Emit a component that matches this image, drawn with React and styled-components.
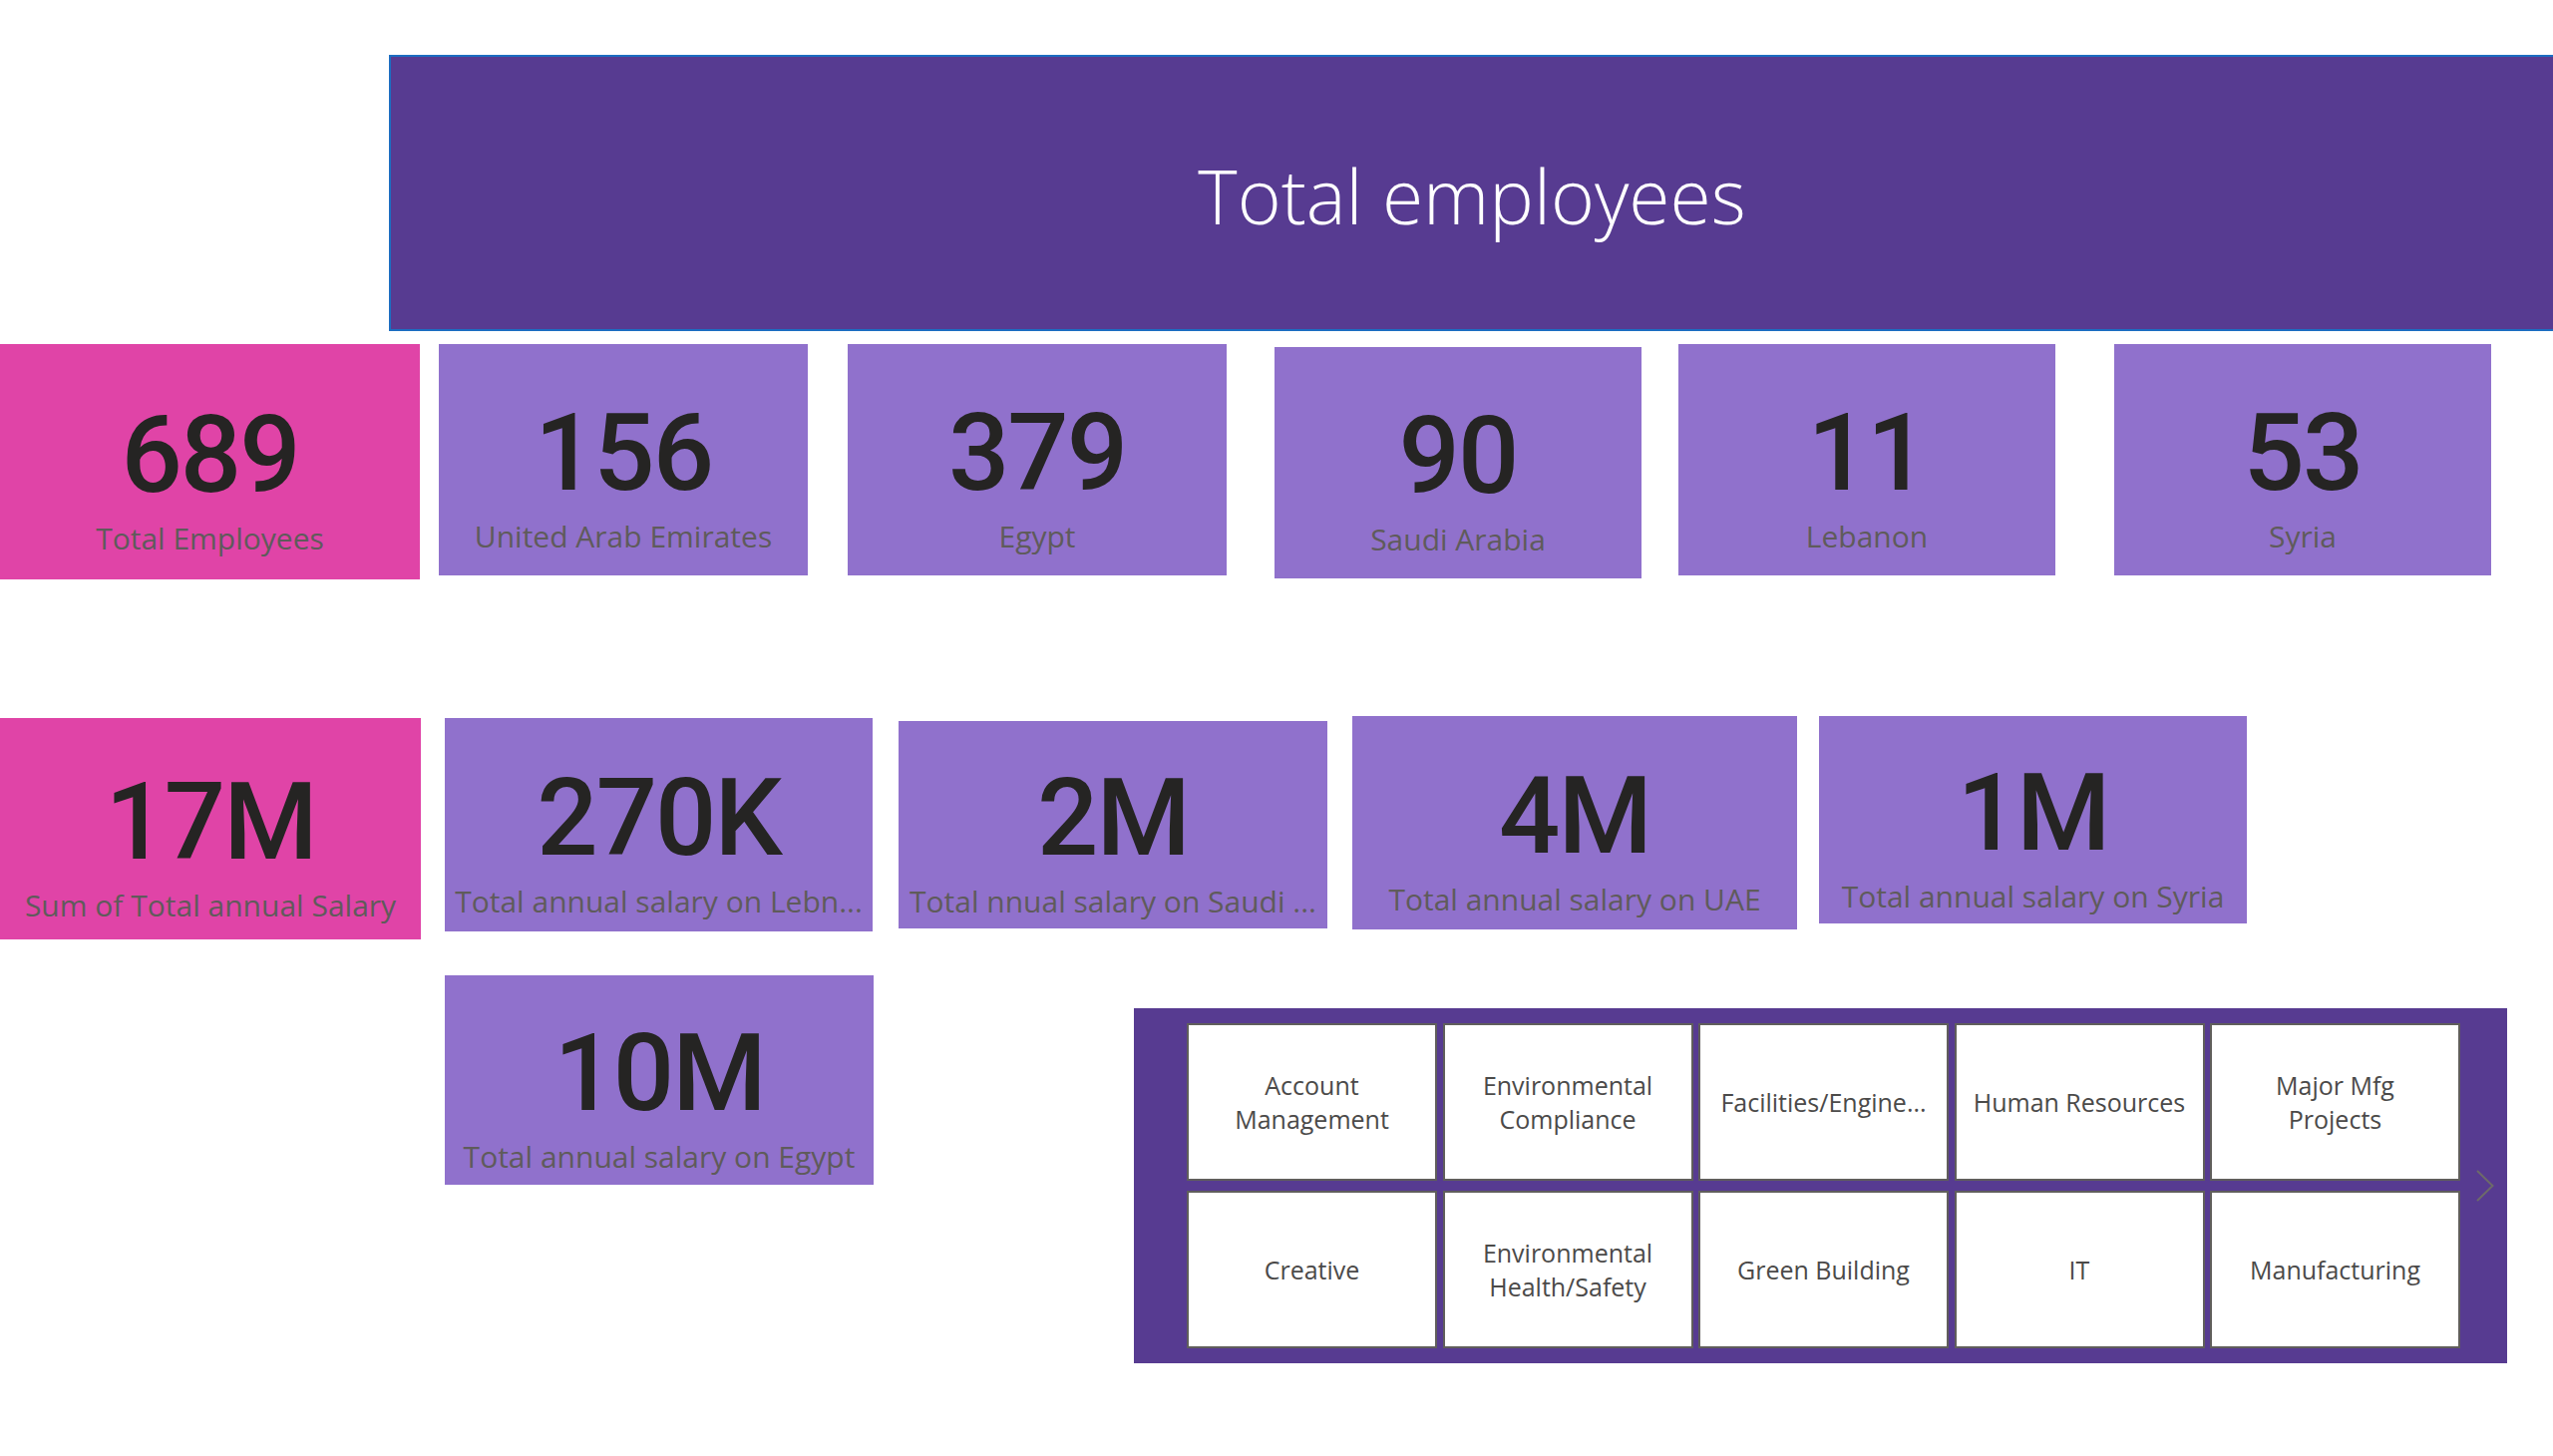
import React from "react";
import styled, { createGlobalStyle } from "styled-components";

const GlobalStyle = createGlobalStyle`
  html, body {
    margin: 0;
    padding: 0;
    background: #ffffff;
  }
  body {
    font-family: "Open Sans", "Noto Sans", sans-serif;
  }
`;

const Page = styled.div`
  width: 2560px;
  height: 1460px;
  overflow: hidden;
  background: #ffffff;
  display: flex;
  flex-direction: column;
`;

const Banner = styled.header`
  margin: 55px 0 0 390px;
  height: 277px;
  box-sizing: border-box;
  background: #573b91;
  border: 2px solid #1c6dc1;
  border-right: none;
  display: flex;
  align-items: center;
  justify-content: center;
  padding-top: 4px;
  color: #ffffff;
  font-family: "Open Sans", sans-serif;
  font-weight: 300;
  font-size: 75px;
`;

const Row = styled.div`
  display: flex;
  align-items: flex-start;
  margin-top: ${(p) => p.$top}px;
`;

const Card = styled.div`
  flex: none;
  box-sizing: border-box;
  width: ${(p) => p.$w}px;
  height: ${(p) => p.$h}px;
  margin-left: ${(p) => p.$gap}px;
  margin-top: ${(p) => p.$dy || 0}px;
  background: ${(p) => (p.$accent ? "#e044a7" : "#9071cc")};
  display: flex;
  flex-direction: column;
  align-items: center;
  justify-content: center;
  padding-top: 34px;
  overflow: hidden;
`;

const Value = styled.div`
  font-family: Roboto, "DejaVu Sans", sans-serif;
  font-weight: 500;
  font-size: 108px;
  line-height: 110px;
  letter-spacing: -2px;
  color: #252423;
`;

const Caption = styled.div`
  margin-top: 9px;
  font-family: "Open Sans", sans-serif;
  font-size: 30px;
  line-height: 40px;
  color: #5f5b5b;
  white-space: nowrap;
`;

const Slicer = styled.div`
  flex: none;
  box-sizing: border-box;
  width: 1377px;
  height: 356px;
  margin-left: ${(p) => p.$gap}px;
  margin-top: ${(p) => p.$dy}px;
  padding: 15px 0 15px 53px;
  background: #573b91;
  display: flex;
  align-items: center;
`;

const TileGrid = styled.div`
  display: grid;
  grid-template-columns: repeat(5, 251px);
  grid-auto-rows: 158px;
  column-gap: 5.5px;
  row-gap: 10px;
`;

const Tile = styled.div`
  box-sizing: border-box;
  background: #ffffff;
  border: 2px solid #605e5c;
  display: flex;
  align-items: center;
  justify-content: center;
  text-align: center;
  padding: 0 8px;
  font-family: "Open Sans", sans-serif;
  font-size: 25px;
  line-height: 34px;
  color: #4b4a49;
`;

const Chevron = styled.svg`
  margin-left: 16px;
  flex: none;
`;

const headcount = [
  { value: "689", label: "Total Employees", w: 421, h: 236, gap: 0, accent: true },
  { value: "156", label: "United Arab Emirates", w: 370, h: 232, gap: 19 },
  { value: "379", label: "Egypt", w: 380, h: 232, gap: 40 },
  { value: "90", label: "Saudi Arabia", w: 368, h: 232, gap: 48, dy: 3 },
  { value: "11", label: "Lebanon", w: 378, h: 232, gap: 37 },
  { value: "53", label: "Syria", w: 378, h: 232, gap: 59 },
];

const salaries = [
  { value: "17M", label: "Sum of Total annual Salary", w: 422, h: 222, gap: 0, dy: 2, accent: true },
  { value: "270K", label: "Total annual salary on Lebn...", w: 429, h: 214, gap: 24, dy: 2 },
  { value: "2M", label: "Total nnual salary on Saudi ...", w: 430, h: 208, gap: 26, dy: 5 },
  { value: "4M", label: "Total annual salary on UAE", w: 446, h: 214, gap: 25 },
  { value: "1M", label: "Total annual salary on Syria", w: 429, h: 208, gap: 22 },
];

const departments = [
  ["Account", "Management"],
  ["Environmental", "Compliance"],
  ["Facilities/Engine..."],
  ["Human Resources"],
  ["Major Mfg", "Projects"],
  ["Creative"],
  ["Environmental", "Health/Safety"],
  ["Green Building"],
  ["IT"],
  ["Manufacturing"],
];

const KpiCard = ({ item }) => (
  <Card $w={item.w} $h={item.h} $gap={item.gap} $dy={item.dy} $accent={item.accent}>
    <Value>{item.value}</Value>
    <Caption>{item.label}</Caption>
  </Card>
);

export default function App() {
  return (
    <Page>
      <GlobalStyle />
      <Banner>Total employees</Banner>

      <Row $top={13}>
        {headcount.map((item) => (
          <KpiCard key={item.label} item={item} />
        ))}
      </Row>

      <Row $top={137}>
        {salaries.map((item) => (
          <KpiCard key={item.label} item={item} />
        ))}
      </Row>

      <Row $top={36}>
        <KpiCard
          item={{ value: "10M", label: "Total annual salary on Egypt", w: 430, h: 210, gap: 446 }}
        />
        <Slicer $gap={261} $dy={33}>
          <TileGrid>
            {departments.map((lines) => (
              <Tile key={lines.join(" ")}>
                <span>
                  {lines.map((line, i) => (
                    <React.Fragment key={line}>
                      {i > 0 && <br />}
                      {line}
                    </React.Fragment>
                  ))}
                </span>
              </Tile>
            ))}
          </TileGrid>
          <Chevron width="18" height="32" viewBox="0 0 18 32">
            <polyline points="1,1 16.5,16 1,31" fill="none" stroke="#6d6a6a" strokeWidth="2" />
          </Chevron>
        </Slicer>
      </Row>
    </Page>
  );
}
